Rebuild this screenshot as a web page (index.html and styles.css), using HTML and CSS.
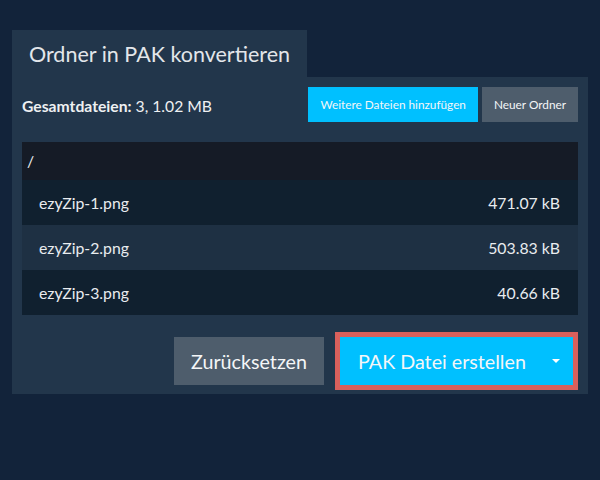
FILE: index.html
```html
<!DOCTYPE html>
<html lang="de">
<head>
  <meta charset="UTF-8">
  <meta name="viewport" content="width=device-width, initial-scale=1.0">
  <title>Ordner in PAK konvertieren</title>
  <link rel="stylesheet" href="styles.css">
</head>
<body>

  <div class="converter">
    <div class="tabs">
      <div class="tab">Ordner in PAK konvertieren</div>
    </div>
    <div class="panel">
      <div class="toolbar">
        <div class="summary"><b>Gesamtdateien:</b> 3, 1.02 MB</div>
        <div class="actions">
          <button class="btn btn-primary btn-small">Weitere Dateien hinzufügen</button>
          <button class="btn btn-grey btn-small">Neuer Ordner</button>
        </div>
      </div>

      <div class="files">
        <div class="folder">/</div>
        <div class="file">
          <span>ezyZip-1.png</span>
          <span>471.07 kB</span>
        </div>
        <div class="file">
          <span>ezyZip-2.png</span>
          <span>503.83 kB</span>
        </div>
        <div class="file">
          <span>ezyZip-3.png</span>
          <span>40.66 kB</span>
        </div>
      </div>

      <div class="footer">
        <button class="btn btn-grey btn-large">Zurücksetzen</button>
        <button class="btn btn-primary btn-large split highlight">
          <span>PAK Datei erstellen</span>
          <span class="caret"></span>
        </button>
      </div>
    </div>
  </div>

</body>
</html>
```

FILE: styles.css
```css
body {
  font-family: Lato, "Open Sans", sans-serif;
  margin: 0;
  padding: 30px 12px 0;
  background-color: #12233a;
  color: #e9ecef;
}
.converter {
  width: 576px;
}
.tabs {
  display: flex;
}
.tab {
  background-color: #22364b;
  width: 295px;
  height: 47px;
  display: flex;
  align-items: center;
  justify-content: center;
  font-size: 21.5px;
  color: #e3e6ea;
  white-space: nowrap;
}
.panel {
  background-color: #22364b;
  padding: 10px 10px 4px;
}
.toolbar {
  display: flex;
  justify-content: space-between;
  align-items: center;
}
.summary {
  font-size: 15.7px;
  color: #eef0f2;
  padding-top: 3px;
}
.actions {
  display: flex;
  gap: 4px;
}
.btn {
  font-family: inherit;
  border: none;
  color: #f4f6f8;
  cursor: pointer;
  margin: 0;
  white-space: nowrap;
}
.btn-primary {
  background-color: #00c0ff;
}
.btn-grey {
  background-color: #4e5d6c;
}
.btn-small {
  font-size: 11.8px;
  height: 35px;
  padding: 0 12px;
}
.btn-large {
  font-size: 19.7px;
  height: 48px;
  padding: 0 17px;
}
.files {
  margin-top: 20px;
  font-size: 15.8px;
}
.folder {
  background-color: #151b26;
  height: 38px;
  line-height: 38px;
  padding: 0 5px;
}
.file {
  display: flex;
  justify-content: space-between;
  align-items: center;
  height: 45px;
  padding: 0 18px 0 17px;
  background-color: #10202f;
}
.file:nth-child(odd) {
  background-color: #1e3043;
}
.footer {
  display: flex;
  justify-content: flex-end;
  align-items: center;
  gap: 11px;
  margin-top: 17px;
}
.split {
  display: flex;
  align-items: center;
  justify-content: space-between;
  box-sizing: border-box;
  width: 243px;
  height: 58px;
  padding: 0 13px 0 18px;
}
.highlight {
  border: 5px solid #d9605c;
}
.caret {
  width: 0;
  height: 0;
  border-left: 4px solid transparent;
  border-right: 4px solid transparent;
  border-top: 4px solid #ffffff;
}
```
